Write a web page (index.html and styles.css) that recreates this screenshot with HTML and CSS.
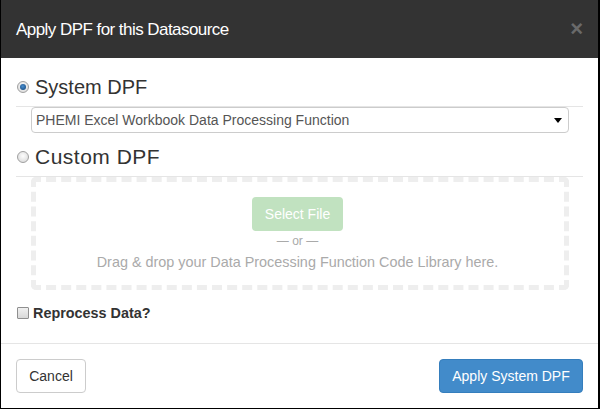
FILE: index.html
```html
<!DOCTYPE html>
<html>
<head>
<meta charset="utf-8">
<link rel="stylesheet" href="styles.css">
</head>
<body>
<div class="modal">
  <div class="modal-header">
    <h4 class="title">Apply DPF for this Datasource</h4>
    <span class="close">×</span>
  </div>
  <div class="modal-body">
    <div class="radio-row first">
      <span class="radio checked"></span>
      <span class="radio-label">System DPF</span>
    </div>
    <div class="rule"></div>
    <div class="select">
      <span>PHEMI Excel Workbook Data Processing Function</span>
      <span class="caret"></span>
    </div>
    <div class="radio-row">
      <span class="radio"></span>
      <span class="radio-label wide">Custom DPF</span>
    </div>
    <div class="rule"></div>
    <div class="dropzone">
      <div class="btn-select">Select File</div>
      <div class="or">— or —</div>
      <div class="drag">Drag &amp; drop your Data Processing Function Code Library here.</div>
    </div>
    <div class="check-row">
      <span class="checkbox"></span>
      <span class="check-label">Reprocess Data?</span>
    </div>
  </div>
  <div class="modal-footer">
    <div class="btn btn-default">Cancel</div>
    <div class="btn btn-primary">Apply System DPF</div>
  </div>
</div>
</body>
</html>
```

FILE: styles.css
```css
* { box-sizing: border-box; }
html, body { margin: 0; padding: 0; background: #fff; }
body {
  font-family: "Liberation Sans", Arial, sans-serif;
  color: #333;
  width: 600px;
  height: 409px;
  overflow: hidden;
}
.modal {
  width: 600px;
  height: 409px;
  border: 1px solid #000;
  border-top: none;
  border-right-width: 2px;
  display: flex;
  flex-direction: column;
  background: #fff;
}
.modal-header {
  height: 58px;
  background: #333;
  display: flex;
  align-items: center;
  justify-content: space-between;
  padding: 0 15px 0 15px;
  flex-shrink: 0;
}
.title {
  margin: 0;
  font-weight: normal;
  font-size: 17px;
  letter-spacing: -0.55px;
  color: #fff;
  line-height: 20px;
  padding-top: 1px;
}
.close {
  font-size: 22px;
  font-weight: bold;
  color: #6a6a6a;
  line-height: 20px;
  margin-right: 0;
}
.modal-body {
  padding: 0 15px 0 15px;
  flex: 1;
}
.radio-row {
  display: flex;
  align-items: center;
  height: 28px;
  margin-top: 10px;
}
.radio-row.first { margin-top: 15px; }
.radio {
  width: 12px;
  height: 12px;
  border-radius: 50%;
  border: 1px solid #a0a0a0;
  background: radial-gradient(circle at 50% 40%, #fdfdfd, #d5d5d5);
  margin-left: 1px;
  margin-right: 6px;
  position: relative;
  flex-shrink: 0;
}
.radio.checked::after {
  content: "";
  position: absolute;
  left: 2px;
  top: 2px;
  width: 6px;
  height: 6px;
  border-radius: 50%;
  background: radial-gradient(circle at 45% 40%, #4a8fd0, #0d3f73);
}
.radio-label {
  font-size: 20px;
  line-height: 28px;
  color: #333;
}
.radio-label.wide { font-size: 21px; letter-spacing: 0.5px; }
.rule {
  height: 1px;
  background: #e5e5e5;
  margin-top: 5px;
}
.select {
  margin-left: 15px;
  width: 538px;
  height: 26px;
  border: 1px solid #ccc;
  border-radius: 4px;
  display: flex;
  align-items: center;
  justify-content: space-between;
  padding: 0 6px 0 4px;
  font-size: 14px;
  color: #555;
}
.caret {
  width: 0;
  height: 0;
  border-left: 4px solid transparent;
  border-right: 4px solid transparent;
  border-top: 5px solid #000;
  margin-top: 1px;
}
.dropzone {
  margin-left: 15px;
  width: 538px;
  height: 113px;
  border: 5px dashed #eee;
  border-radius: 5px;
  display: flex;
  flex-direction: column;
  align-items: center;
  padding-top: 15px;
}
.btn-select {
  width: 91px;
  height: 34px;
  border-radius: 4px;
  background: #c1e2c0;
  color: #fff;
  font-size: 14px;
  display: flex;
  align-items: center;
  justify-content: center;
  margin-left: -5px;
}
.or {
  font-size: 12px;
  color: #aaa;
  line-height: 16px;
  margin-top: 2px;
  margin-left: -5px;
}
.drag {
  font-size: 14.4px;
  color: #aaa;
  line-height: 18px;
  margin-top: 4px;
  margin-left: -5px;
}
.check-row {
  display: flex;
  align-items: center;
  height: 20px;
  margin-top: 13px;
}
.checkbox {
  width: 12px;
  height: 12px;
  border: 1px solid #8f8f8f;
  background: linear-gradient(#f0f0f0, #d8d8d8);
  border-radius: 1px;
  margin-left: 1px;
  margin-right: 4px;
}
.check-label {
  font-size: 14.4px;
  font-weight: bold;
  color: #333;
}
.modal-footer {
  border-top: 1px solid #e5e5e5;
  height: 65px;
  padding: 15px 15px 0 15px;
  display: flex;
  justify-content: space-between;
  align-items: flex-start;
  flex-shrink: 0;
}
.btn {
  height: 34px;
  border-radius: 4px;
  font-size: 14px;
  display: flex;
  align-items: center;
  justify-content: center;
  padding: 0 12px;
  border: 1px solid transparent;
}
.btn-default {
  width: 70px;
  border-color: #ccc;
  color: #333;
  background: #fff;
}
.btn-primary {
  width: 144px;
  background: #428bca;
  border-color: #357ebd;
  color: #fff;
}
```
